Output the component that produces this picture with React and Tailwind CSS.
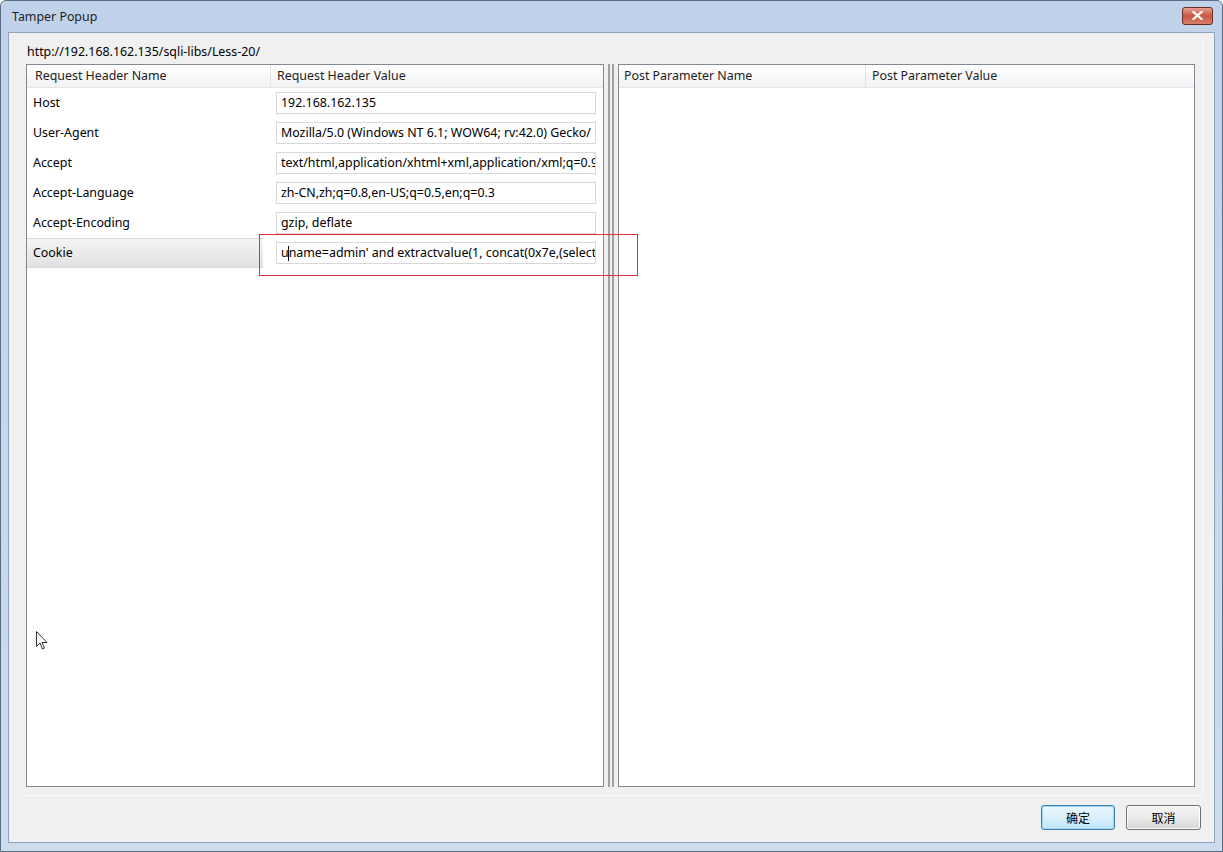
import React from "react";

// values as far as they show in the cells
const headers = [
  { name: "Host", value: "192.168.162.135" },
  { name: "User-Agent", value: "Mozilla/5.0 (Windows NT 6.1; WOW64; rv:42.0) Gecko/" },
  { name: "Accept", value: "text/html,application/xhtml+xml,application/xml;q=0.9" },
  { name: "Accept-Language", value: "zh-CN,zh;q=0.8,en-US;q=0.5,en;q=0.3" },
  { name: "Accept-Encoding", value: "gzip, deflate" },
  { name: "Cookie", value: "uname=admin' and extractvalue(1, concat(0x7e,(select", selected: true },
];

const HeaderCell = ({ children, className }) => (
  <div className={"h-[22px] flex items-center border-r border-[#e3e3e3] " + className}>{children}</div>
);

const App = () => {
  return (
    <div
      className="w-[1223px] h-[852px] flex flex-col bg-gradient-to-b from-[#c0d2ea] to-[#cddcef] border border-[#5a6d86] rounded-t-[6px] text-[12.4px] text-black"
      style={{ fontFamily: '"Noto Sans", "Noto Sans CJK SC", sans-serif' }}
    >
      {/* title bar */}
      <div className="h-[31px] flex items-center justify-between pl-[11px] pr-[9px] shrink-0">
        <span className="text-[12.4px] text-[#1e1e1e] pt-[2px]">Tamper Popup</span>
        <div className="w-[31px] h-[18px] mb-[2px] rounded-[3px] border border-[#6b2b22] bg-gradient-to-b from-[#e8a08f] via-[#c7553f] to-[#d6806a] flex items-center justify-center">
          <svg width="11" height="9" viewBox="0 0 11 9">
            <path d="M1.5 1 L9.5 8 M9.5 1 L1.5 8" stroke="#ffffff" strokeWidth="2.2" strokeLinecap="square" />
          </svg>
        </div>
      </div>

      {/* client area */}
      <div className="flex-1 mx-[7px] mb-[8px] bg-[#f0f0f0] border border-[#8fa3bf] flex flex-col">
        <div className="flex-1 mx-[11px] mt-[7px] flex flex-col border-r border-b border-[#fbfbfb]">
          <div className="h-[24px] flex items-center pl-[7px]">http://192.168.162.135/sqli-libs/Less-20/</div>
          <div className="flex h-[723px] pl-[6px]">
            {/* left table */}
            <div className="w-[578px] border border-[#828790] bg-white flex flex-col relative">
              <div className="flex bg-gradient-to-b from-white to-[#f1f2f4] border-b border-[#e5e5e5] text-[#1e1e1e]">
                <HeaderCell className="w-[244px] pl-[8px] pt-[1px]">Request Header Name</HeaderCell>
                <HeaderCell className="w-[330px] pl-[6px] pt-[1px] border-r-0">Request Header Value</HeaderCell>
              </div>
              {headers.map((h) => (
                <div key={h.name} className="flex h-[30px] items-center">
                  <div
                    className={
                      "w-[236px] h-full flex items-center pl-[6px] " +
                      (h.selected ? "bg-gradient-to-b from-[#f4f4f4] to-[#e1e1e1] border-y border-[#d9d9d9]" : "")
                    }
                  >
                    {h.name}
                  </div>
                  <div className="w-[13px]" />
                  <div className="w-[320px] h-[22px] border border-[#d8d8d8] bg-white flex items-center px-[4px] overflow-hidden whitespace-nowrap">
                    {h.selected ? (
                      <span>
                        u<span className="inline-block w-px h-[15px] bg-black align-middle -mx-[0.5px]" />
                        {h.value.slice(1)}
                      </span>
                    ) : (
                      h.value
                    )}
                  </div>
                </div>
              ))}
              {/* red highlight annotation */}
              <div className="absolute left-[232px] top-[169px] w-[379px] h-[42px] border border-[#e0303a] z-10" />
              {/* mouse cursor */}
              <svg className="absolute left-[9px] top-[566px]" width="12" height="19" viewBox="0 0 12 19">
                <path d="M0.5 0.5 L0.5 15.5 L4 12 L6.5 18 L8.5 17 L6 11.5 L11 11.5 Z" fill="white" stroke="#333" strokeWidth="1" />
              </svg>
            </div>

            {/* splitter */}
            <div className="w-[14px] flex justify-center gap-[2px]">
              <div className="w-[2px] border-x border-[#a0a0a0] bg-white" />
              <div className="w-[2px] border-x border-[#a0a0a0] bg-white" />
            </div>

            {/* right table */}
            <div className="w-[577px] border border-[#828790] bg-white flex flex-col">
              <div className="flex bg-gradient-to-b from-white to-[#f1f2f4] border-b border-[#e5e5e5] text-[#1e1e1e]">
                <HeaderCell className="w-[247px] pl-[5px] pt-[1px]">Post Parameter Name</HeaderCell>
                <HeaderCell className="w-[328px] pl-[6px] pt-[1px] border-r-0">Post Parameter Value</HeaderCell>
              </div>
            </div>
          </div>
          <div className="h-[7px]" />
        </div>

        {/* buttons */}
        <div className="h-[46px] flex items-start pt-[9px] justify-end pr-[13px] gap-[11px] shrink-0">
          <button
            className="w-[74px] h-[25px] rounded-[3px] border border-[#3c7fb1] bg-gradient-to-b from-[#eaf6fd] via-[#d9f0fc] to-[#bee6fd] shadow-[0_0_0_1px_#9fd6f5_inset] text-[12px]"
            style={{ fontFamily: '"Noto Sans CJK SC", sans-serif' }}
          >
            确定
          </button>
          <button
            className="w-[75px] h-[25px] rounded-[3px] border border-[#707070] bg-gradient-to-b from-[#f2f2f2] via-[#ebebeb] to-[#d6d6d6] shadow-[0_0_0_1px_#fcfcfc_inset] text-[12px]"
            style={{ fontFamily: '"Noto Sans CJK SC", sans-serif' }}
          >
            取消
          </button>
        </div>
      </div>
    </div>
  );
};

export default App;
